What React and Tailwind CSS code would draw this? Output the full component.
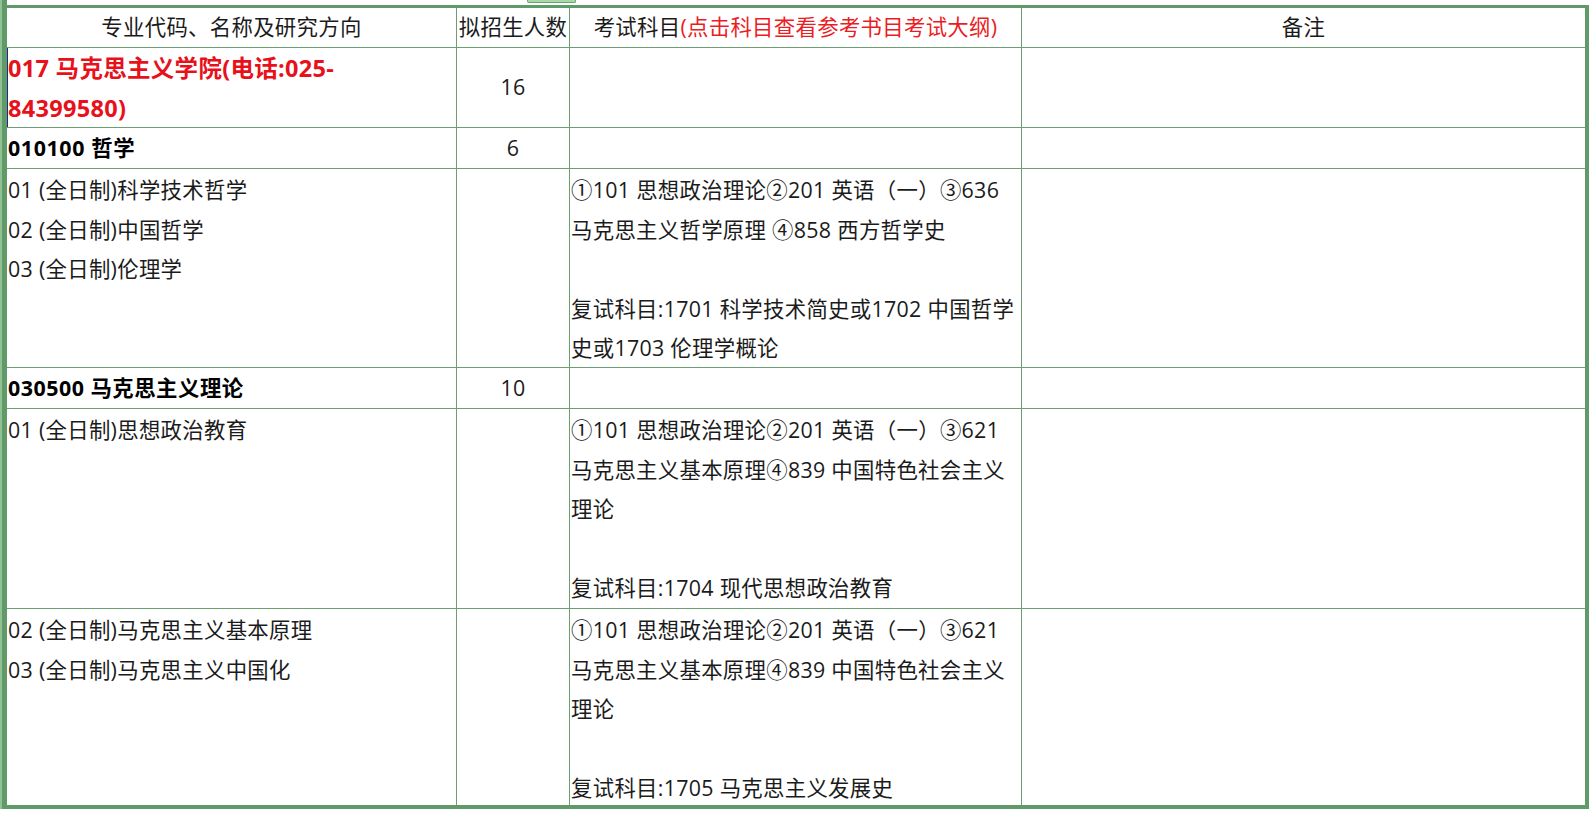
import React from "react";

const font = { fontFamily: '"Open Sans", "Noto Sans CJK SC", sans-serif' };

const philosophyExam = [
  "①101 思想政治理论②201 英语（一）③636",
  "马克思主义哲学原理 ④858 西方哲学史",
  "",
  "复试科目:1701 科学技术简史或1702 中国哲学",
  "史或1703 伦理学概论",
];

const examA = [
  "①101 思想政治理论②201 英语（一）③621",
  "马克思主义基本原理④839 中国特色社会主义",
  "理论",
  "",
  "复试科目:1704 现代思想政治教育",
];

const examB = [
  "①101 思想政治理论②201 英语（一）③621",
  "马克思主义基本原理④839 中国特色社会主义",
  "理论",
  "",
  "复试科目:1705 马克思主义发展史",
];

const Lines = ({ items }) => (
  <div className="pt-px pl-px">
    {items.map((t, i) => (
      <div key={i} className="h-[39.5px] leading-[39.5px] whitespace-nowrap">
        {t}
      </div>
    ))}
  </div>
);

const cell = "border-r border-b border-[#6b9f72] overflow-hidden";
const lastCell = "border-b border-[#6b9f72] overflow-hidden";

const App = () => {
  return (
    <div
      className="w-[1592px] h-[814px] bg-white flex text-[21.4px] tracking-[0.3px] text-[#1b1b1b]"
      style={font}
    >
      {/* left frame */}
      <div className="w-[7px] h-[809px] border-l-2 border-[#8fc192] bg-[#5f9a68]" />

      <div className="w-[1578px] flex flex-col">
        {/* sheet tab fragment */}
        <div className="h-[5px] flex">
          <div className="ml-[520px] w-[49px] h-[3px] bg-[#a7d8a5] border-b border-x border-[#6aa56f] rounded-b-[2px]" />
        </div>
        <div className="h-[3px] bg-[#5f9a68]" />

        <div className="grid grid-cols-[450px_113px_452px_563px] grid-rows-[40px_80px_41px_199px_41px_200px_196px]">
          {/* header */}
          <div className={`${cell} flex items-center justify-center`}>专业代码、名称及研究方向</div>
          <div className={`${cell} flex items-center justify-center`}>拟招生人数</div>
          <div className={`${cell} flex items-center justify-center whitespace-nowrap`}>
            考试科目<span className="text-[#ec1c24]">(点击科目查看参考书目考试大纲)</span>
          </div>
          <div className={`${lastCell} flex items-center justify-center`}>备注</div>

          {/* 017 */}
          <div className={`${cell} shadow-[inset_1px_0_0_#1f2d86] text-[#e8101a] font-bold text-[23.5px] pl-px whitespace-nowrap`}>
            <div className="leading-[40px]">017 马克思主义学院(电话:025-</div>
            <div className="leading-[40px]">84399580)</div>
          </div>
          <div className={`${cell} flex items-center justify-center`}>16</div>
          <div className={cell} />
          <div className={lastCell} />

          {/* 010100 */}
          <div className={`${cell} font-bold text-black pl-px leading-[40px] tracking-[0.6px]`}>010100 哲学</div>
          <div className={`${cell} flex items-center justify-center`}>6</div>
          <div className={cell} />
          <div className={lastCell} />

          {/* philosophy directions */}
          <div className={cell}>
            <Lines items={["01 (全日制)科学技术哲学", "02 (全日制)中国哲学", "03 (全日制)伦理学"]} />
          </div>
          <div className={cell} />
          <div className={cell}>
            <Lines items={philosophyExam} />
          </div>
          <div className={lastCell} />

          {/* 030500 */}
          <div className={`${cell} font-bold text-black pl-px leading-[40px] tracking-[0.5px]`}>030500 马克思主义理论</div>
          <div className={`${cell} flex items-center justify-center`}>10</div>
          <div className={cell} />
          <div className={lastCell} />

          {/* 01 */}
          <div className={cell}>
            <Lines items={["01 (全日制)思想政治教育"]} />
          </div>
          <div className={cell} />
          <div className={cell}>
            <Lines items={examA} />
          </div>
          <div className={lastCell} />

          {/* 02 / 03 */}
          <div className="border-r border-[#6b9f72] overflow-hidden">
            <Lines items={["02 (全日制)马克思主义基本原理", "03 (全日制)马克思主义中国化"]} />
          </div>
          <div className="border-r border-[#6b9f72]" />
          <div className="border-r border-[#6b9f72] overflow-hidden">
            <Lines items={examB} />
          </div>
          <div />
        </div>

        <div className="h-[4px] bg-[#5f9a68]" />
      </div>

      {/* right frame */}
      <div className="w-[4px] h-[804px] mt-[5px] bg-[#5f9a68]" />
    </div>
  );
};

export default App;
